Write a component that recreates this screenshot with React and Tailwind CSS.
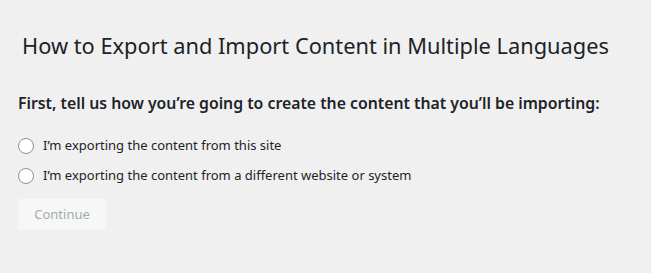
export default function App() {
  return (
    <div className="min-h-[273px] bg-[#f0f0f1] text-[#1d2327] font-['Noto_Sans',sans-serif] pt-[31px] pl-[18px]">
      <h1 className="pl-[4px] text-[21.8px] leading-[29px] font-normal">
        How to Export and Import Content in Multiple Languages
      </h1>
      <h2 className="mt-[33px] text-[15.8px] leading-[20px] font-semibold">
        First, tell us how you’re going to create the content that you’ll be importing:
      </h2>
      <div className="mt-[23px] flex flex-col gap-[11px] text-[13px] leading-[19px]">
        <label className="flex items-center gap-[9px]">
          <span className="w-4 h-4 rounded-full border border-[#8c8f94] bg-white" />
          I’m exporting the content from this site
        </label>
        <label className="flex items-center gap-[9px]">
          <span className="w-4 h-4 rounded-full border border-[#8c8f94] bg-white" />
          I’m exporting the content from a different website or system
        </label>
      </div>
      <button className="mt-[14px] w-[88px] h-[31px] rounded-[3px] bg-[#f6f7f7] text-[#a7aaad] text-[13px]">
        Continue
      </button>
    </div>
  );
}
